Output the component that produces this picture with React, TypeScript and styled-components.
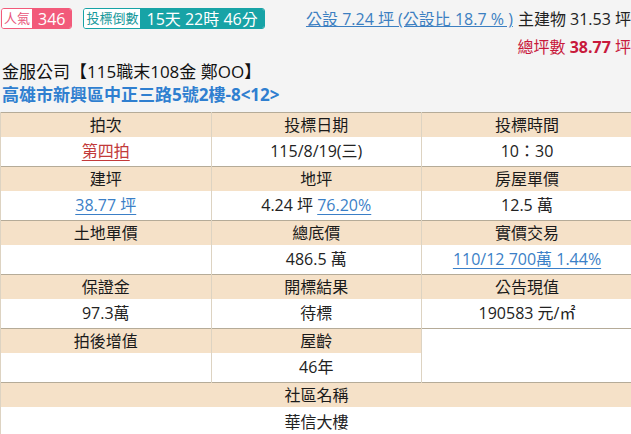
import React from "react";
import styled, { createGlobalStyle } from "styled-components";

const Global = createGlobalStyle`
  html, body { margin: 0; padding: 0; background: #f4f4f4; }
  body {
    font-family: "Open Sans", "Noto Sans CJK TC", "Noto Sans", sans-serif;
    color: #222;
    overflow: hidden;
  }
`;

const Page = styled.div`
  width: 631px;
  height: 434px;
  overflow: hidden;
  background: #f4f4f4;
`;

const TopBar = styled.div`
  display: flex;
  justify-content: space-between;
  align-items: flex-start;
  height: 60px;
  overflow: visible;
`;

const Badges = styled.div`
  display: flex;
  gap: 11px;
  padding: 8px 0 0 1px;
`;

const Badge = styled.div<{ $c: string }>`
  display: flex;
  height: 21px;
  border: 1px solid ${(p) => p.$c};
  border-radius: 3px;
  overflow: hidden;
  box-sizing: border-box;
`;

const BadgeLabel = styled.span<{ $c: string }>`
  display: flex;
  align-items: center;
  padding: 0 2px;
  background: #fff;
  color: ${(p) => p.$c};
  font-size: 13px;
  line-height: 1;
`;

const BadgeValue = styled.span<{ $c: string; $size: number }>`
  display: flex;
  align-items: center;
  padding: 0 6px;
  background: ${(p) => p.$c};
  color: #fff;
  font-size: ${(p) => p.$size}px;
  line-height: 1;
  white-space: nowrap;
`;

const Summary = styled.div`
  display: flex;
  flex-direction: column;
  align-items: flex-end;
  padding-top: 9px;
  font-size: 16px;
  white-space: nowrap;
`;

const SummaryLine = styled.div`
  display: flex;
  align-items: center;
  gap: 5px;
  height: 20px;
  line-height: 20px;
  & + & { margin-top: 8px; }
`;

const PublicLink = styled.a`
  color: #3c7fc1;
  text-decoration: underline;
`;

const Total = styled.span`
  color: #c8193c;
  b { font-weight: 700; }
`;

const Title = styled.div`
  height: 23px;
  font-size: 17px;
  line-height: 23px;
  padding-left: 2px;
  color: #111;
  white-space: nowrap;
`;

const Address = styled.div`
  height: 29px;
  font-size: 17px;
  line-height: 23px;
  font-weight: 700;
  color: #2f7fd0;
  padding-left: 2px;
  white-space: nowrap;
`;

const Table = styled.table`
  border-collapse: collapse;
  width: 632px;
  table-layout: fixed;
  background: #fff;
  border-left: 1px solid #a79e8c;
  border-top: 1px solid #a79e8c;
`;

const HeadRow = styled.tr`
  height: 24px;
  border-top: 1px solid #b5ab98;
`;

const DataRow = styled.tr`
  height: 30px;
`;

const Th = styled.td`
  background: #f5e1c8;
  text-align: center;
  font-size: 16px;
  line-height: 18px;
  padding: 0;
  border-left: 1px solid #ddd3c2;
  color: #1a1a1a;
  vertical-align: middle;
`;

const Td = styled.td`
  text-align: center;
  font-size: 16px;
  line-height: 18px;
  padding: 0;
  border-left: 1px solid #ddd3c2;
  color: #222;
  background: #fff;
  vertical-align: middle;
`;

const Link = styled.a<{ $red?: boolean }>`
  color: ${(p) => (p.$red ? "#c23a3a" : "#3b7fc7")};
  text-decoration: underline;
  text-underline-offset: 3px;
`;

export default function App() {
  return (
    <Page>
      <Global />
      <TopBar>
        <Badges>
          <Badge $c="#f25a7a">
            <BadgeLabel $c="#e8557a">人氣</BadgeLabel>
            <BadgeValue $c="#f25a7a" $size={16}>346</BadgeValue>
          </Badge>
          <Badge $c="#17a3a6">
            <BadgeLabel $c="#17989b">投標倒數</BadgeLabel>
            <BadgeValue $c="#17a3a6" $size={16}>15天 22時 46分</BadgeValue>
          </Badge>
        </Badges>
        <Summary>
          <SummaryLine>
            <PublicLink>公設 7.24 坪 (公設比 18.7 % )</PublicLink>
            <span>主建物 31.53 坪</span>
          </SummaryLine>
          <SummaryLine>
            <Total>
              總坪數 <b>38.77</b> 坪
            </Total>
          </SummaryLine>
        </Summary>
      </TopBar>
      <Title>金服公司【115職末108金 鄭OO】</Title>
      <Address>高雄市新興區中正三路5號2樓-8&lt;12&gt;</Address>
      <Table>
        <tbody>
          <HeadRow>
            <Th>拍次</Th>
            <Th>投標日期</Th>
            <Th>投標時間</Th>
          </HeadRow>
          <DataRow>
            <Td><Link $red>第四拍</Link></Td>
            <Td>115/8/19(三)</Td>
            <Td>10：30</Td>
          </DataRow>
          <HeadRow>
            <Th>建坪</Th>
            <Th>地坪</Th>
            <Th>房屋單價</Th>
          </HeadRow>
          <DataRow>
            <Td><Link>38.77 坪</Link></Td>
            <Td>4.24 坪 <Link>76.20%</Link></Td>
            <Td>12.5 萬</Td>
          </DataRow>
          <HeadRow>
            <Th>土地單價</Th>
            <Th>總底價</Th>
            <Th>實價交易</Th>
          </HeadRow>
          <DataRow>
            <Td></Td>
            <Td>486.5 萬</Td>
            <Td><Link>110/12 700萬 1.44%</Link></Td>
          </DataRow>
          <HeadRow>
            <Th>保證金</Th>
            <Th>開標結果</Th>
            <Th>公告現值</Th>
          </HeadRow>
          <DataRow>
            <Td>97.3萬</Td>
            <Td>待標</Td>
            <Td>190583 元/㎡</Td>
          </DataRow>
          <HeadRow>
            <Th>拍後增值</Th>
            <Th>屋齡</Th>
            <Td rowSpan={2}></Td>
          </HeadRow>
          <DataRow>
            <Td></Td>
            <Td>46年</Td>
          </DataRow>
          <HeadRow>
            <Th colSpan={3}>社區名稱</Th>
          </HeadRow>
          <DataRow>
            <Td colSpan={3}>華信大樓</Td>
          </DataRow>
        </tbody>
      </Table>
    </Page>
  );
}
